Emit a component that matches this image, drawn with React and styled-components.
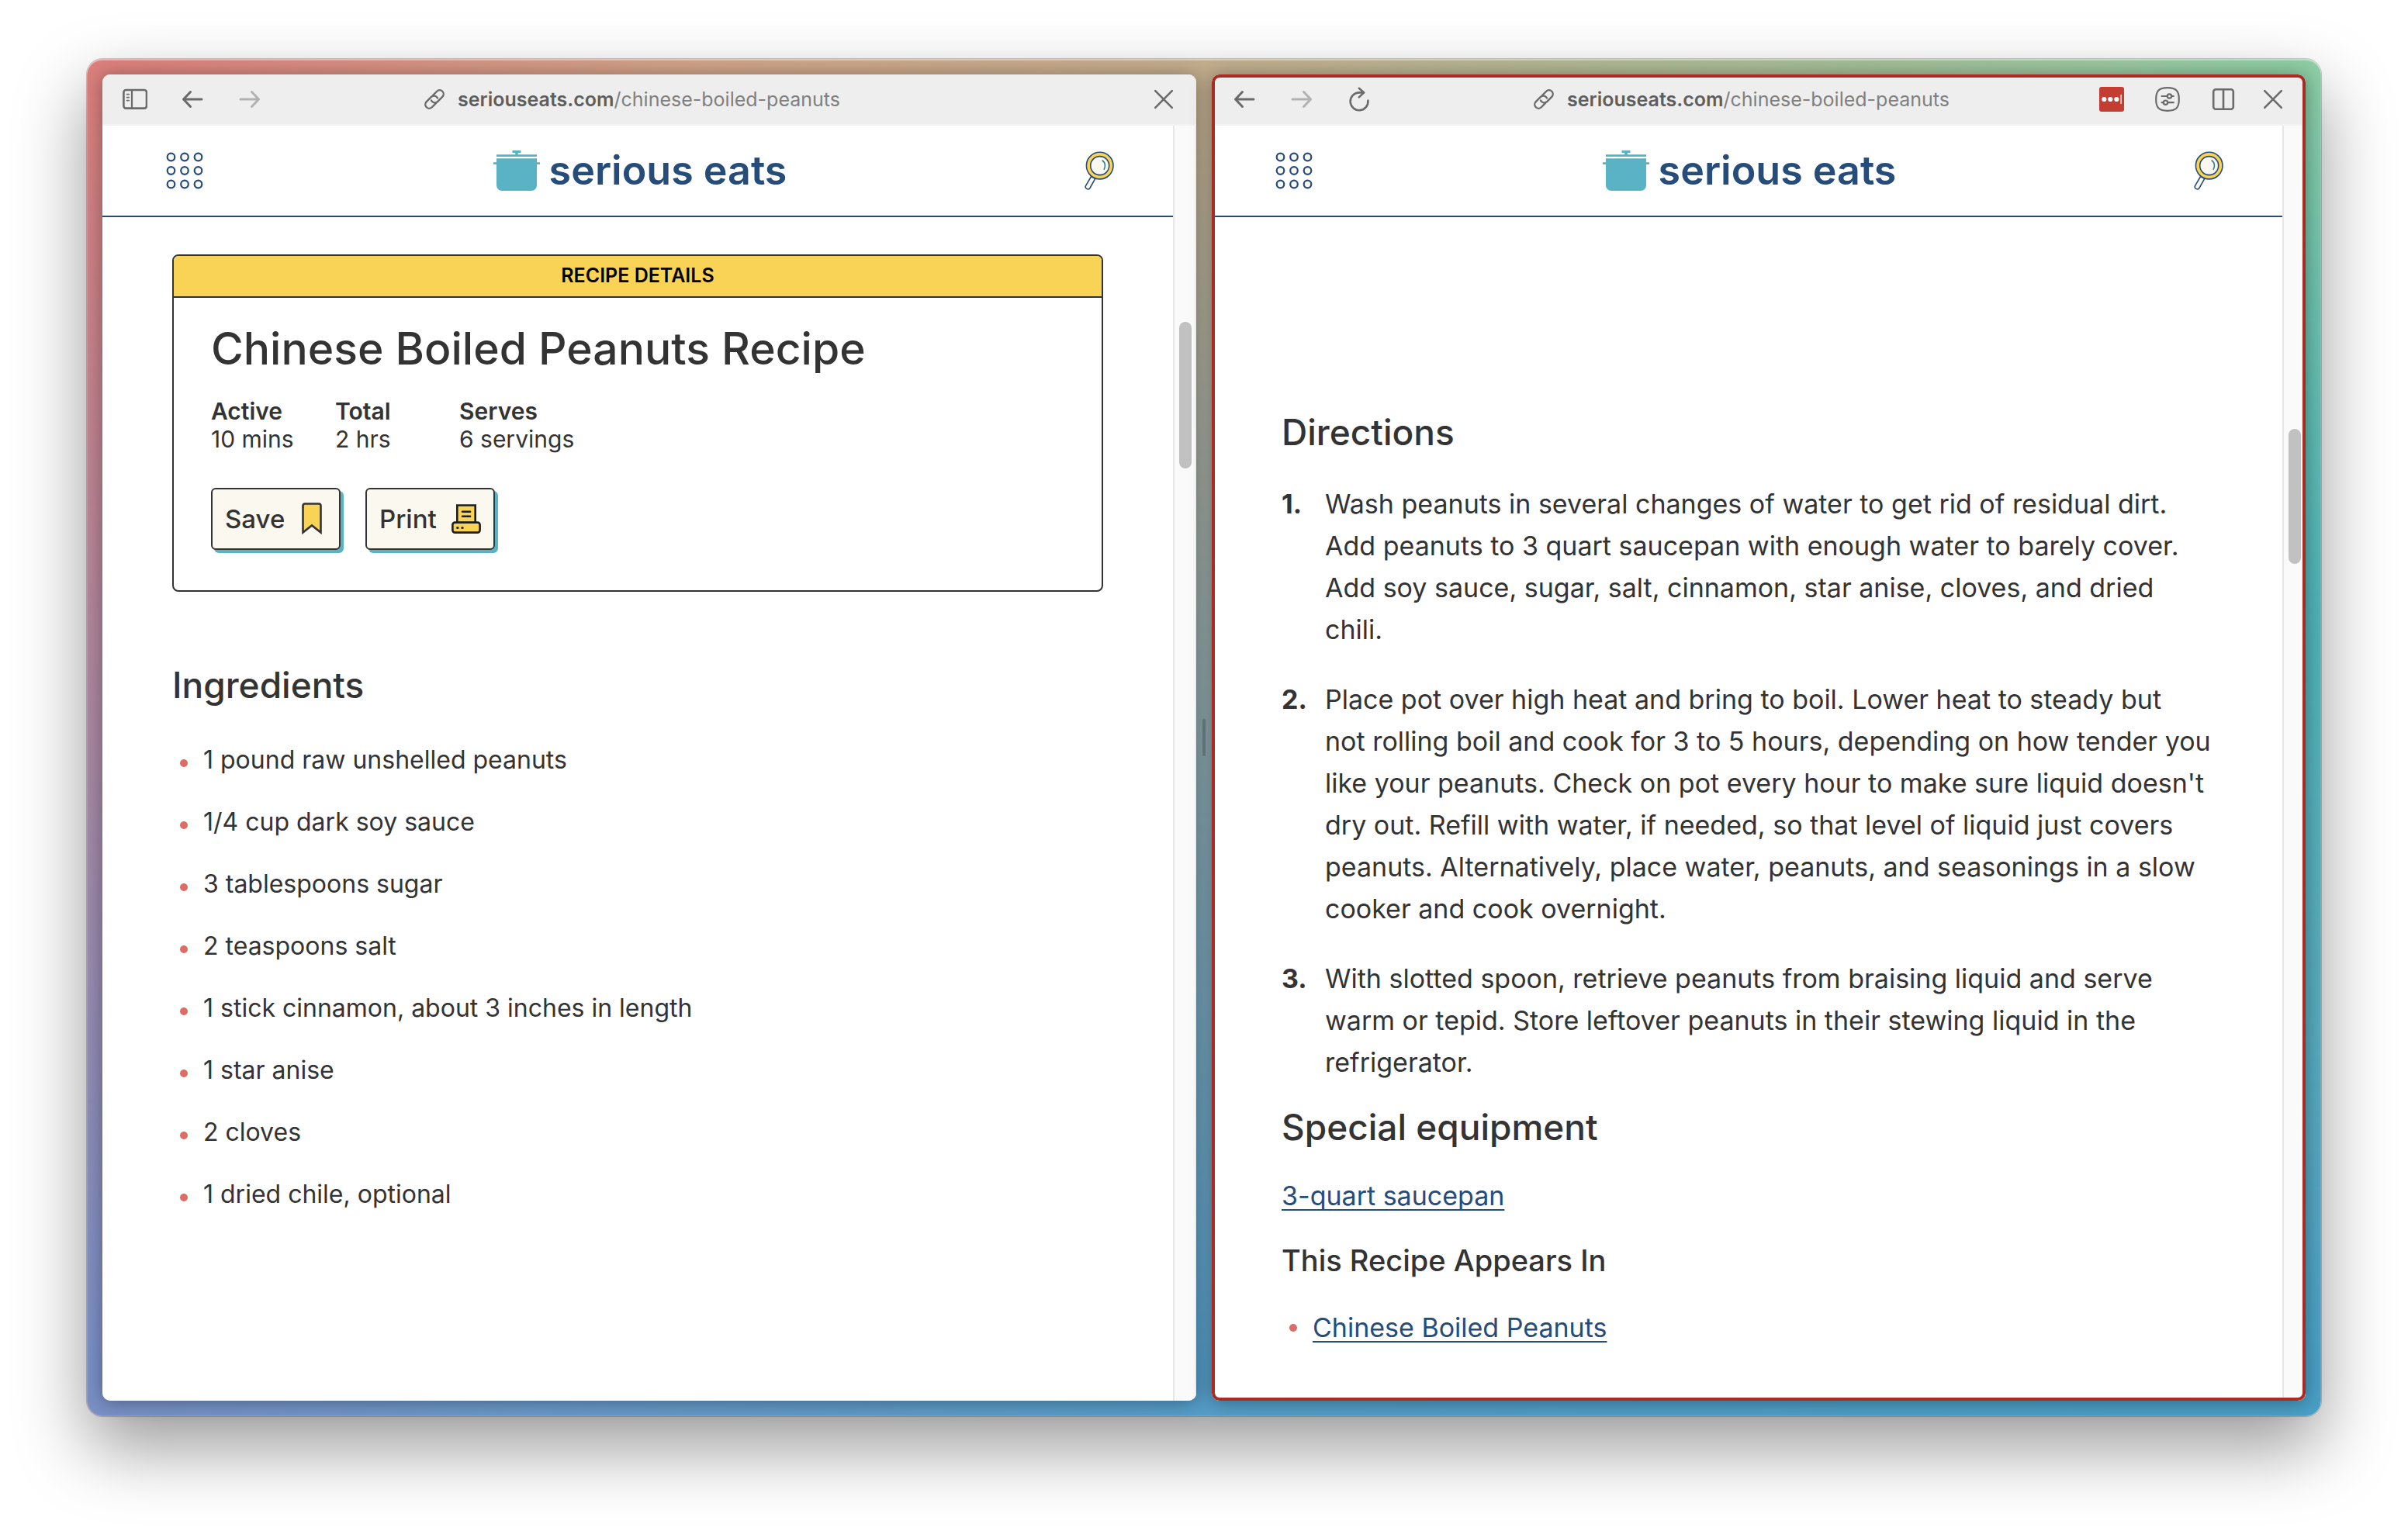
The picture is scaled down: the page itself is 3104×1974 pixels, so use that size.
import React from "react";
import styled, { createGlobalStyle } from "styled-components";

const GlobalStyle = createGlobalStyle`
  *, *::before, *::after { box-sizing: border-box; }
  body {
    margin: 0;
    background: #ffffff;
    color: #333333;
    font-family: Inter, "Liberation Sans", sans-serif;
    -webkit-font-smoothing: antialiased;
  }
  h1, h2, h3, p, ul, ol, dl, dd { margin: 0; padding: 0; }
  ul, ol { list-style: none; }
`;

const Desktop = styled.div`
  display: flex;
  min-height: 100vh;
  padding: 76px 112px 148px;
  overflow: hidden;
`;

const Window = styled.main`
  position: relative;
  flex: 1;
  display: flex;
  min-width: 0;
  padding: 20px;
  border-radius: 20px;
  background:
    radial-gradient(ellipse 20% 45% at 100% 42%, rgba(70, 190, 175, 0.85), rgba(70, 190, 175, 0) 100%),
    linear-gradient(90deg, #dd7f7b 0%, #d0a488 28%, #c3ad8c 50%, #a3bd97 80%, #92cfa4 100%);
  box-shadow: 0 0 0 1px rgba(0, 0, 0, 0.2), 0 40px 92px rgba(0, 0, 0, 0.4);

  &::before {
    content: "";
    position: absolute;
    inset: 0;
    border-radius: inherit;
    background: linear-gradient(90deg, #7a90c6 0%, #6a98c9 20%, #559dc8 50%, #4a9fc6 100%);
    mask-image: linear-gradient(180deg, transparent 0%, #000 96%);
  }

  &::after {
    content: "";
    position: absolute;
    inset: 0;
    border-radius: inherit;
    box-shadow: inset 0 2px 0 rgba(255, 255, 255, 0.35), inset 0 0 0 1px rgba(255, 255, 255, 0.15);
    pointer-events: none;
  }
`;

const Pane = styled.section`
  position: relative;
  z-index: 1;
  flex: 1;
  min-width: 0;
  display: flex;
  flex-direction: column;
  border-radius: 10px;
  overflow: hidden;
  background: #ffffff;
`;

const PaneShell = styled.div`
  position: relative;
  z-index: 1;
  flex: 1;
  min-width: 0;
  display: flex;
  border-radius: 10px;
  box-shadow: 0 2px 24px rgba(0, 0, 0, 0.36);

  &::after {
    content: "";
    position: absolute;
    inset: 0;
    z-index: 2;
    border-radius: inherit;
    border: ${(p) => (p.$active ? "4px solid #a92b22" : "0")};
    pointer-events: none;
  }
`;

const Divider = styled.div`
  position: relative;
  z-index: 2;
  width: 20px;
  display: flex;
  align-items: center;
  justify-content: center;

  &::before {
    content: "";
    width: 4px;
    height: 48px;
    border-radius: 2px;
    background: rgba(70, 85, 90, 0.5);
  }
`;

const Toolbar = styled.div`
  display: flex;
  align-items: center;
  gap: 13px;
  height: 66px;
  padding: 0 26px;
  background: #eeeeee;
  border-bottom: 2px solid #f3f3f3;
`;

const ToolbarMain = styled.div`
  flex: 1;
  display: grid;
  grid-template-columns: 1fr auto 1fr;
  align-items: center;
`;

const ToolGroup = styled.div`
  display: flex;
  gap: ${(p) => (p.$end ? 40 : 42)}px;
  justify-content: ${(p) => (p.$end ? "flex-end" : "flex-start")};
  padding-right: ${(p) => (p.$end ? 19 : 0)}px;
`;

const IconButton = styled.button`
  display: flex;
  align-items: center;
  justify-content: center;
  width: ${(p) => p.$size || 32}px;
  height: ${(p) => p.$size || 32}px;
  padding: 0;
  border: 0;
  background: none;
  color: #6b6b6b;
  opacity: ${(p) => (p.disabled ? 0.45 : 1)};

  svg { flex: none; display: block; }
`;

const Address = styled.button`
  display: flex;
  align-items: center;
  gap: 16px;
  padding: 0;
  border: 0;
  background: none;
  color: #808080;
  font: 400 25px/32px Inter, "Liberation Sans", sans-serif;
  white-space: nowrap;

  strong { font-weight: 600; color: #5e5e5e; }
  svg { flex: none; display: block; }
`;

const PaneBody = styled.div`
  flex: 1;
  display: flex;
  min-height: 0;
`;

const Page = styled.article`
  flex: 1;
  min-width: 0;
`;

const Track = styled.div`
  width: 30px;
  padding: ${(p) => p.$offset}px 6px 0;
  border-left: 2px solid #e7e7e7;
  border-right: 2px solid #efefef;
  background: #fafafa;

  &::before {
    content: "";
    display: block;
    width: 16px;
    height: ${(p) => p.$length}px;
    border-radius: 8px;
    background: #c1c1c1;
  }
`;

const SiteHeader = styled.header`
  display: grid;
  grid-template-columns: 1fr auto 1fr;
  align-items: center;
  height: 118px;
  padding: 0 76px 0 82px;
  border-bottom: 2px solid #264c7a;

  > :last-child { justify-self: end; }
`;

const Brand = styled.a`
  display: flex;
  align-items: center;
  gap: 12px;
  color: #264c7a;
  font-size: 52px;
  font-weight: 600;
  line-height: 64px;
  text-decoration: none;
  white-space: nowrap;
`;

const Content = styled.div`
  max-width: 1200px;
  margin: 0 auto;
  padding-top: ${(p) => p.$top}px;
`;

const Card = styled.section`
  border: 2px solid #333333;
  border-radius: 8px;
  overflow: hidden;
`;

const CardBanner = styled.p`
  height: 54px;
  border-bottom: 2px solid #333333;
  background: #f9d355;
  color: #000000;
  font-size: 25px;
  font-weight: 600;
  line-height: 50px;
  text-align: center;
`;

const CardBody = styled.div`
  padding: 34px 48px 52px;
`;

const Title = styled.h1`
  font-size: 57px;
  font-weight: 500;
  line-height: 64px;
`;

const Facts = styled.dl`
  display: grid;
  grid-template-columns: 160px 160px auto;
  margin-top: 30px;
  font-size: 30px;
  line-height: 36px;

  dt { font-weight: 600; }
`;

const Actions = styled.div`
  display: flex;
  gap: 32px;
  margin-top: 45px;
`;

const ActionButton = styled.button`
  display: flex;
  align-items: center;
  justify-content: space-between;
  width: 167px;
  height: 80px;
  padding: 0 16px;
  border: 2px solid #333333;
  border-radius: 6px;
  background: #fbf8ef;
  box-shadow: 4px 4px 0 #5ab3c4;
  color: #333333;
  font: 500 33px/40px Inter, "Liberation Sans", sans-serif;

  svg { display: block; }
`;

const Heading = styled.h2`
  margin-top: ${(p) => p.$gap || 0}px;
  font-size: 46px;
  font-weight: 500;
  line-height: 56px;
`;

const SubHeading = styled.h3`
  margin-top: 32px;
  font-size: 38px;
  font-weight: 500;
  line-height: 48px;
`;

const Bullets = styled.ul`
  display: grid;
  gap: 40px;
  margin-top: ${(p) => (p.$links ? 36 : 49)}px;
  font-size: ${(p) => (p.$links ? 34 : 32)}px;
  line-height: ${(p) => (p.$links ? 54 : 40)}px;

  li {
    display: flex;
    align-items: center;
    gap: 20px;
    padding-left: 10px;
  }

  li::before {
    content: "";
    width: 10px;
    height: 10px;
    margin-top: ${(p) => (p.$links ? 0 : 8)}px;
    border-radius: 50%;
    background: #dd6b66;
  }
`;

const Steps = styled.ol`
  display: grid;
  gap: 36px;
  margin-top: 38px;
  font-size: 34px;
  line-height: 54px;
  counter-reset: step;

  li {
    display: grid;
    grid-template-columns: 56px 1fr;
    counter-increment: step;
  }

  li::before {
    content: counter(step) ".";
    font-weight: 700;
  }
`;

const Paragraph = styled.p`
  margin-top: 34px;
  font-size: 34px;
  line-height: 54px;
`;

const TextLink = styled.a`
  color: #264c7a;
  text-decoration: underline;
  text-decoration-thickness: 2px;
  text-underline-offset: 5px;
  text-decoration-skip-ink: none;
`;

const stroke = {
  fill: "none",
  stroke: "currentColor",
  strokeWidth: 2.6,
  strokeLinecap: "round",
  strokeLinejoin: "round",
};

const SidebarIcon = () => (
  <svg width="32" height="28" viewBox="0 0 32 28" {...stroke}>
    <rect x="1.4" y="2" width="29.6" height="23.6" rx="3" />
    <path d="M12 2v23.6" strokeWidth="2.2" />
    <path d="M5.6 7.6h2.6M5.6 11.6h2.6M5.6 15.6h2.6" strokeWidth="1.8" />
  </svg>
);

const BackIcon = () => (
  <svg width="28" height="24" viewBox="0 0 28 24" {...stroke} strokeWidth="3">
    <path d="M11.5 2.5 2.5 12l9 9.5M2.5 12H26" />
  </svg>
);

const ForwardIcon = () => (
  <svg width="28" height="24" viewBox="0 0 28 24" {...stroke} strokeWidth="3">
    <path d="m16.5 2.5 9 9.5-9 9.5M25.5 12H2" />
  </svg>
);

const ReloadIcon = () => (
  <svg width="28" height="32" viewBox="0 0 28 32" {...stroke}>
    <path d="M25.4 17.6A11.4 11.4 0 1 1 14 7.400h5.800" />
    <path d="m13.800 1.800 6.400 5.600-6.400 6" />
  </svg>
);

const CloseIcon = () => (
  <svg width="26" height="26" viewBox="0 0 26 26" {...stroke}>
    <path d="m2.200 2.200 21.600 21.600M23.800 2.200 2.200 23.800" />
  </svg>
);

const ChainIcon = () => (
  <svg width="28" height="28" viewBox="0 0 28 28" {...stroke} stroke="#6b6b6b" strokeWidth="2.4">
    <g transform="rotate(-45 14 14)">
      <path d="M12 19H4.500a5 5 0 0 1 0-10h8.800a5 5 0 0 1 4.600 6.800" />
      <path d="M16 9h7.500a5 5 0 0 1 0 10h-8.800a5 5 0 0 1-4.600-6.800" />
    </g>
  </svg>
);

const PasswordIcon = () => (
  <svg width="32" height="32" viewBox="0 0 32 32">
    <rect width="32" height="32" rx="3" fill="#c43d32" />
    <circle cx="6.3" cy="16" r="3.1" fill="#fff" />
    <circle cx="14.3" cy="16" r="3.1" fill="#fff" />
    <circle cx="22.3" cy="16" r="3.1" fill="#fff" />
    <rect x="27.2" y="10" width="1.8" height="12" fill="#f0c4c0" />
  </svg>
);

const SettingsIcon = () => (
  <svg width="32" height="32" viewBox="0 0 32 32" {...stroke} strokeWidth="2.2">
    <path d="M16 1.200c11 0 14.800 3.800 14.800 14.800S27 30.800 16 30.800 1.200 27 1.200 16 5 1.200 16 1.200z" />
    <path d="M8.600 12h7M21.400 12h2.400M8.600 20.200h2M16.600 20.200h7.200" />
    <circle cx="18.5" cy="12" r="2.7" />
    <circle cx="13.5" cy="20.2" r="2.7" />
  </svg>
);

const SplitIcon = () => (
  <svg width="30" height="30" viewBox="0 0 30 30" {...stroke}>
    <rect x="2.2" y="2.2" width="25.6" height="25.6" rx="3" />
    <path d="M15 2.200v25.600" />
  </svg>
);

const GridIcon = () => (
  <svg width="48" height="48" viewBox="0 0 48 48" fill="#fbf8ef" stroke="#264c7a" strokeWidth="2.2">
    {[6.5, 24, 41.5].map((y) =>
      [6.5, 24, 41.5].map((x) => <circle key={`${x}-${y}`} cx={x} cy={y} r="4.8" />)
    )}
  </svg>
);

const PotIcon = () => (
  <svg width="60" height="52" viewBox="0 0 60 52" fill="#5ab3c4">
    <path d="M24.500 0h11v3h-3.700v2.300H56V8H4V5.300h24.200V3h-3.700z" />
    <path d="M4 10.300h52v4.900h4V18h-4v27a7 7 0 0 1-7 7H11a7 7 0 0 1-7-7V18H0v-2.800h4z" />
  </svg>
);

const MagnifierIcon = () => (
  <svg width="38" height="50" viewBox="0 0 38 50" stroke="#264c7a" strokeWidth="1.6">
    <path d="M8.600 32.500 1.500 44.600c-1.600 3 3.200 6 5.300 3.100L13.800 35.400z" fill="#fbf8ef" />
    <circle cx="19.7" cy="18.6" r="17.3" fill="#f9d355" />
    <circle cx="19.7" cy="18.6" r="12" fill="#fbf8ef" />
    <path d="M23.200 12c3.600 2.600 4.200 7.600 2 11.400" fill="none" stroke="#2f7f93" strokeLinecap="round" />
  </svg>
);

const BookmarkIcon = () => (
  <svg width="38" height="42" viewBox="-6 0 38 42">
    <path d="M1.500 38.500V4A2.500 2.500 0 0 1 4 1.500h18A2.500 2.500 0 0 1 24.500 4v34.500L13 29.500z" fill="#f9d355" stroke="#333333" strokeWidth="2.6" />
  </svg>
);

const PrinterIcon = () => (
  <svg width="38" height="38" viewBox="0 0 38 38" fill="#f9d355" stroke="#1e1e1e" strokeWidth="2.6" strokeLinecap="round">
    <path d="M7.300 24V1.500h23.400V24z" />
    <rect x="1.4" y="23.6" width="35.2" height="13" rx="3" />
    <path d="M14 9.700h10M14 15.700h10" />
    <path d="M7.600 30.400h.4M13.800 30.400h.4" strokeWidth="3" />
  </svg>
);

const NavButton = ({ label, disabled, size, children }) => (
  <IconButton type="button" aria-label={label} disabled={disabled} $size={size}>
    {children}
  </IconButton>
);

function BrowserPane({ active, scroll, children }) {
  return (
    <PaneShell $active={active}>
      <Pane>
        <Toolbar>
          <ToolbarMain>
            <ToolGroup>
              {!active && <NavButton label="Toggle sidebar"><SidebarIcon /></NavButton>}
              <NavButton label="Back"><BackIcon /></NavButton>
              <NavButton label="Forward" disabled><ForwardIcon /></NavButton>
              {active && <NavButton label="Reload"><ReloadIcon /></NavButton>}
            </ToolGroup>
            <Address type="button">
              <ChainIcon />
              <span><strong>seriouseats.com</strong>/chinese-boiled-peanuts</span>
            </Address>
            <ToolGroup $end>
              {active && (
                <>
                  <NavButton label="Passwords"><PasswordIcon /></NavButton>
                  <NavButton label="Site settings"><SettingsIcon /></NavButton>
                  <NavButton label="Split view"><SplitIcon /></NavButton>
                </>
              )}
            </ToolGroup>
          </ToolbarMain>
          <NavButton label="Close"><CloseIcon /></NavButton>
        </Toolbar>
        <PaneBody>
          <Page>
            <SiteHeader>
              <NavButton label="Menu" size={48}><GridIcon /></NavButton>
              <Brand href="#"><PotIcon />serious eats</Brand>
              <NavButton label="Search" size={38}><MagnifierIcon /></NavButton>
            </SiteHeader>
            {children}
          </Page>
          <Track $offset={scroll.offset} $length={scroll.length} />
        </PaneBody>
      </Pane>
    </PaneShell>
  );
}

const ingredients = [
  "1 pound raw unshelled peanuts",
  "1/4 cup dark soy sauce",
  "3 tablespoons sugar",
  "2 teaspoons salt",
  "1 stick cinnamon, about 3 inches in length",
  "1 star anise",
  "2 cloves",
  "1 dried chile, optional",
];

const directions = [
  "Wash peanuts in several changes of water to get rid of residual dirt. Add peanuts to 3 quart saucepan with enough water to barely cover. Add soy sauce, sugar, salt, cinnamon, star anise, cloves, and dried chili.",
  "Place pot over high heat and bring to boil. Lower heat to steady but not\u00a0rolling boil and cook for 3 to 5 hours, depending on how tender you like your peanuts. Check on pot every hour to make sure liquid doesn't dry out. Refill with water, if needed, so that level of liquid just covers peanuts. Alternatively, place water, peanuts, and seasonings in a slow cooker and cook overnight.",
  "With slotted spoon, retrieve peanuts from braising liquid and serve warm or tepid. Store leftover peanuts in their stewing liquid in the refrigerator.",
];

export default function App() {
  return (
    <>
      <GlobalStyle />
      <Desktop>
        <Window>
          <BrowserPane scroll={{ offset: 253, length: 189 }}>
            <Content $top={48}>
              <Card>
                <CardBanner>RECIPE DETAILS</CardBanner>
                <CardBody>
                  <Title>Chinese Boiled Peanuts Recipe</Title>
                  <Facts>
                    <div><dt>Active</dt><dd>10 mins</dd></div>
                    <div><dt>Total</dt><dd>2 hrs</dd></div>
                    <div><dt>Serves</dt><dd>6 servings</dd></div>
                  </Facts>
                  <Actions>
                    <ActionButton type="button">Save<BookmarkIcon /></ActionButton>
                    <ActionButton type="button">Print<PrinterIcon /></ActionButton>
                  </Actions>
                </CardBody>
              </Card>
              <Heading $gap={92}>Ingredients</Heading>
              <Bullets>
                {ingredients.map((item) => <li key={item}>{item}</li>)}
              </Bullets>
            </Content>
          </BrowserPane>
          <Divider />
          <BrowserPane active scroll={{ offset: 391, length: 174 }}>
            <Content $top={249}>
              <Heading>Directions</Heading>
              <Steps>
                {directions.map((step) => <li key={step}>{step}</li>)}
              </Steps>
              <Heading $gap={28}>Special equipment</Heading>
              <Paragraph><TextLink href="#">3-quart saucepan</TextLink></Paragraph>
              <SubHeading>This Recipe Appears In</SubHeading>
              <Bullets $links>
                <li><TextLink href="#">Chinese Boiled Peanuts</TextLink></li>
              </Bullets>
            </Content>
          </BrowserPane>
        </Window>
      </Desktop>
    </>
  );
}
